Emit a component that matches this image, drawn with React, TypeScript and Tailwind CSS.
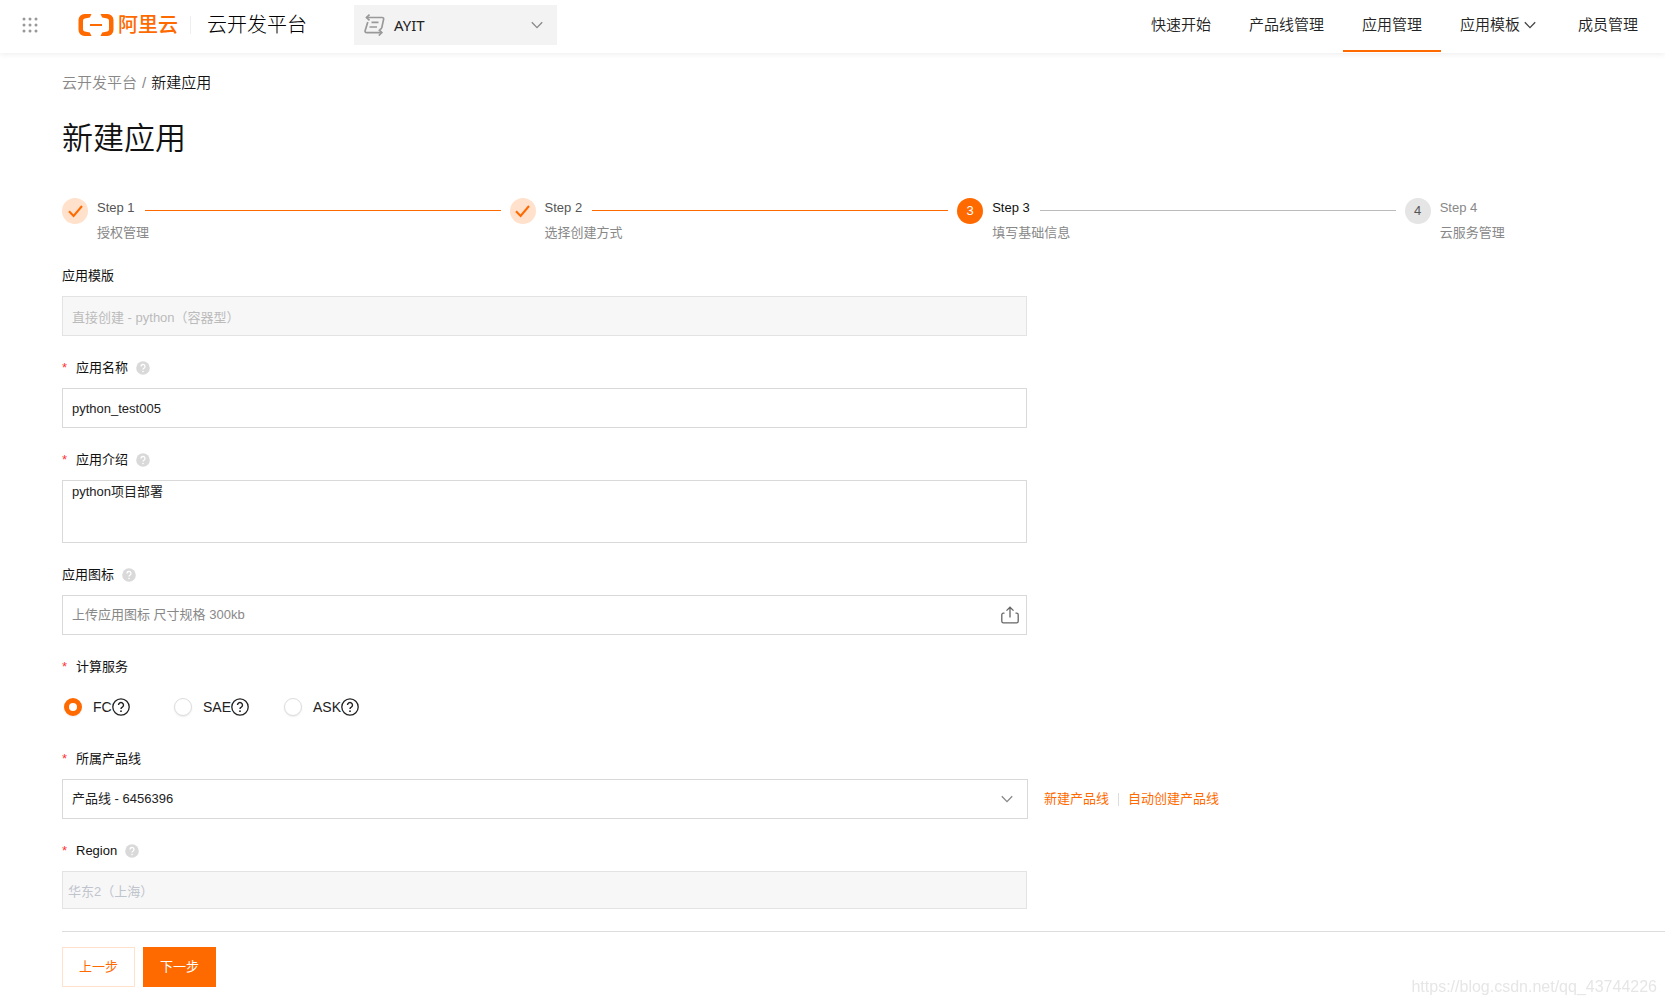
import { useState, type ReactNode } from "react";

const NAV_ITEMS = [
  { label: "快速开始" },
  { label: "产品线管理" },
  { label: "应用管理", active: true },
  { label: "应用模板", dropdown: true },
  { label: "成员管理" },
];

const STEPS = [
  { title: "Step 1", desc: "授权管理", status: "done" },
  { title: "Step 2", desc: "选择创建方式", status: "done" },
  { title: "Step 3", desc: "填写基础信息", status: "active" },
  { title: "Step 4", desc: "云服务管理", status: "wait" },
];

const SERVICES = ["FC", "SAE", "ASK"];

const CIRCLE_STYLE: Record<string, string> = {
  done: "bg-[#ffe1cc] text-[#ff6a00]",
  active: "bg-[#ff6a00] text-white",
  wait: "bg-[#e5e5e5] text-[#555]",
};

const TITLE_STYLE: Record<string, string> = {
  done: "text-[#555]",
  active: "text-[#111]",
  wait: "text-[#888]",
};

function Chevron({ className }: { className: string }) {
  return (
    <svg className={className} width="12" height="12" viewBox="0 0 12 12" fill="none" stroke="currentColor">
      <path d="M0.8 3.2L6 8.6L11.2 3.2" strokeWidth="1.3" />
    </svg>
  );
}

function Logo() {
  return (
    <span className="flex items-center gap-1 text-[#ff6a00]">
      <svg width="36" height="24" viewBox="0 0 36 24" fill="currentColor">
        <path d="M13.5 1H6.5A6 6 0 0 0 0.5 7V17A6 6 0 0 0 6.5 23H13.5L11.8 19.6L6.8 18.5A2.4 2.4 0 0 1 5 16.2V7.8A2.4 2.4 0 0 1 6.8 5.5L11.8 4.4Z" />
        <path d="M22.5 1H29.5A6 6 0 0 1 35.5 7V17A6 6 0 0 1 29.5 23H22.5L24.2 19.6L29.2 18.5A2.4 2.4 0 0 0 31 16.2V7.8A2.4 2.4 0 0 0 29.2 5.5L24.2 4.4Z" />
        <rect x="12" y="11" width="12" height="2" />
      </svg>
      <span className="text-xl leading-6 font-medium">阿里云</span>
    </span>
  );
}

function HelpDot() {
  return (
    <svg className="ml-2 text-[#d9d9d9]" width="14" height="14" viewBox="0 0 14 14">
      <circle cx="7" cy="7" r="6.8" fill="currentColor" />
      <path d="M5 5.5a2 2 0 1 1 3 1.7c-.7.4-1 .7-1 1.4" fill="none" stroke="#fff" strokeWidth="1.3" />
      <circle cx="7" cy="10.5" r="0.8" fill="#fff" />
    </svg>
  );
}

function HelpRing() {
  return (
    <svg width="18" height="18" viewBox="0 0 18 18" fill="none" stroke="#222">
      <circle cx="9" cy="9" r="8.2" strokeWidth="1.3" />
      <path d="M6.5 7.1a2.5 2.5 0 1 1 3.8 2.1c-.9.5-1.3.9-1.3 1.8" strokeWidth="1.4" />
      <circle cx="9" cy="13.2" r="0.9" fill="#222" stroke="none" />
    </svg>
  );
}

interface FieldProps {
  id: string;
  label: string;
  required?: boolean;
  help?: boolean;
  children: ReactNode;
}

function Field({ id, label, required, help, children }: FieldProps) {
  return (
    <div>
      <label htmlFor={id} className="flex h-[26px] items-center mb-[7px] text-[#111]">
        {required && <span className="w-[14px] text-[#ff3333]">*</span>}
        {label}
        {help && <HelpDot />}
      </label>
      {children}
    </div>
  );
}

export default function App() {
  const [name, setName] = useState("python_test005");
  const [intro, setIntro] = useState("python项目部署");
  const [service, setService] = useState("FC");

  return (
    <div className="min-h-screen bg-white text-[13px] leading-5 text-[#222] font-['Liberation_Sans','Noto_Sans_CJK_SC',sans-serif]">
      <header className="flex h-[53px] items-start pl-[22px] pr-2 shadow-[0_1px_6px_rgba(0,0,0,0.08)]">
        <div className="flex h-[50px] items-center">
          <button type="button" aria-label="产品" className="text-[#999]">
            <svg width="16" height="16" viewBox="0 0 16 16" fill="currentColor">
              {[2, 8, 14].map((y) => [2, 8, 14].map((x) => <circle key={`${x}-${y}`} cx={x} cy={y} r="1.5" />))}
            </svg>
          </button>
          <a href="#" className="ml-10"><Logo /></a>
          <span className="ml-3 h-[18px] w-px bg-[#eee]" />
          <a href="#" className="ml-4 text-xl leading-6 font-light text-black">云开发平台</a>
          <button type="button" className="ml-[47px] flex h-10 w-[203px] items-center bg-[#f3f3f3] px-[10px]">
            <svg width="21" height="22" viewBox="0 0 21 22" fill="none" stroke="#999" strokeWidth="1.7">
              <path d="M2.5 3.5H18Q20 3.5 19.6 5.4L17.8 13.6Q17.4 15.2 15.8 15.4" />
              <path d="M5.5 0.6L2.5 3.5L5.5 6.4" />
              <path d="M3.8 8L1.2 16.4Q0.6 18.6 2.8 18.6H17.5" />
              <path d="M14.8 15.7L17.8 18.6L14.8 21.5" />
              <path d="M7.5 8.3H14.5M5.5 13H13" />
            </svg>
            <span className="ml-[9px] font-['Noto_Sans',sans-serif] text-[15px] leading-5">AYIT</span>
            <Chevron className="ml-auto mr-1 text-[#888]" />
          </button>
        </div>

        <nav className="ml-auto flex text-[15px]">
          {NAV_ITEMS.map((item) => (
            <a
              key={item.label}
              href="#"
              className={`flex h-[52px] items-center border-b-2 px-[19px] font-[350] ${item.active ? "border-[#ff6a00]" : "border-transparent"}`}
            >
              {item.label}
              {item.dropdown && <Chevron className="mx-1 text-[#444]" />}
            </a>
          ))}
        </nav>
      </header>

      <main className="pl-[62px]">
        <nav className="flex gap-[5px] pt-5 text-[15px] font-[350] text-[#888]">
          <a href="#">云开发平台</a>
          <span>/</span>
          <span className="text-[#111]">新建应用</span>
        </nav>
        <h1 className="mt-[26px] text-[31px] leading-10 font-[350] text-[#111]">新建应用</h1>

        <ol className="mt-[39px] flex w-[90%]">
          {STEPS.map((step, i) => (
            <li key={step.title} className={`flex ${i < 3 ? "flex-1" : ""}`}>
              <span className={`flex size-[26px] shrink-0 items-center justify-center rounded-full ${CIRCLE_STYLE[step.status]}`}>
                {step.status === "done" ? (
                  <svg width="15" height="13" viewBox="0 0 15 13" fill="none" stroke="currentColor" strokeWidth="2">
                    <path d="M1 6.2L5.6 11L14 1" />
                  </svg>
                ) : (
                  i + 1
                )}
              </span>
              <div className="ml-[9px] min-w-0 flex-1">
                <div className={`flex items-center ${TITLE_STYLE[step.status]}`}>
                  {step.title}
                  {i < 3 && (
                    <span className={`mt-1 ml-[10px] mr-[9px] flex-1 border-t ${step.status === "done" ? "border-[#ff6a00]" : "border-[#bbb]"}`} />
                  )}
                </div>
                <p className="mt-[5px] whitespace-nowrap text-[#888]">{step.desc}</p>
              </div>
            </li>
          ))}
        </ol>

        <form className="mt-5" onSubmit={(e) => e.preventDefault()}>
          <div className="flex flex-col gap-[19px]">
            <Field id="template" label="应用模版">
              <input
                id="template"
                disabled
                value="直接创建 - python（容器型）"
                className="block h-10 w-full max-w-[965px] border border-[#e3e3e3] bg-[#f7f7f7] px-[9px] text-[#bbb]"
              />
            </Field>
            <Field id="name" label="应用名称" required help>
              <input
                id="name"
                value={name}
                onChange={(e) => setName(e.target.value)}
                className="block h-10 w-full max-w-[965px] border border-[#d9d9d9] px-[9px]"
              />
            </Field>
            <Field id="intro" label="应用介绍" required help>
              <textarea
                id="intro"
                value={intro}
                onChange={(e) => setIntro(e.target.value)}
                className="block h-[63px] w-full max-w-[965px] resize-none border border-[#d9d9d9] px-[9px] py-px"
              />
            </Field>
            <Field id="icon" label="应用图标" help>
              <button
                id="icon"
                type="button"
                className="flex h-10 w-full max-w-[965px] items-center justify-between border border-[#d9d9d9] pl-[9px] pr-[7px] text-[#888]"
              >
                上传应用图标 尺寸规格 300kb
                <svg width="18" height="18" viewBox="0 0 18 18" fill="none" stroke="#666" strokeWidth="1.3">
                  <path d="M3.5 7.2H2.4Q0.8 7.2 0.8 8.8V15.2Q0.8 16.8 2.4 16.8H15.6Q17.2 16.8 17.2 15.2V8.8Q17.2 7.2 15.6 7.2H14.5" />
                  <path d="M9 11.5V1.2M5.5 4.6L9 1.2L12.5 4.6" />
                </svg>
              </button>
            </Field>
            <Field id="service-FC" label="计算服务" required>
              <div className="flex h-10 items-center pl-[2px]">
                {SERVICES.map((s) => (
                  <label key={s} htmlFor={`service-${s}`} className="flex w-[110px] items-center text-sm">
                    <input
                      id={`service-${s}`}
                      type="radio"
                      name="service"
                      checked={service === s}
                      onChange={() => setService(s)}
                      className="mr-[11px] size-[18px] appearance-none rounded-full border border-[#ddd] bg-white shadow-[0_1px_2px_rgba(0,0,0,0.08)] checked:border-[5px] checked:border-[#ff6a00]"
                    />
                    {s}
                    <HelpRing />
                  </label>
                ))}
              </div>
            </Field>
            <Field id="line" label="所属产品线" required>
              <div className="flex items-center">
                <div className="relative w-full max-w-[966px]">
                  <select id="line" className="block h-10 w-full appearance-none border border-[#d9d9d9] bg-white px-[9px]">
                    <option>产品线 - 6456396</option>
                  </select>
                  <Chevron className="pointer-events-none absolute right-[15px] top-[14px] text-[#888]" />
                </div>
                <div className="ml-4 flex shrink-0 items-center gap-[9px] text-[#ff6a00]">
                  <a href="#">新建产品线</a>
                  <span className="h-[13px] w-px bg-[#ddd]" />
                  <a href="#">自动创建产品线</a>
                </div>
              </div>
            </Field>
            <Field id="region" label="Region" required help>
              <input
                id="region"
                disabled
                value="华东2（上海）"
                className="block h-[38px] w-full max-w-[965px] border border-[#e3e3e3] bg-[#f7f7f7] px-[5px] text-[#c0c4cc]"
              />
            </Field>
          </div>

          <div className="mt-[22px] flex gap-2 border-t border-[#ddd] py-[15px]">
            <button type="button" className="h-10 w-[73px] border border-[#ffe1cc] text-[#ff6a00]">上一步</button>
            <button type="submit" className="h-10 w-[73px] bg-[#ff6a00] text-white">下一步</button>
          </div>
        </form>
      </main>

      <span className="fixed right-2 bottom-2 text-base leading-5 text-[#e6e6e6]">
        https://blog.csdn.net/qq_43744226
      </span>
    </div>
  );
}
